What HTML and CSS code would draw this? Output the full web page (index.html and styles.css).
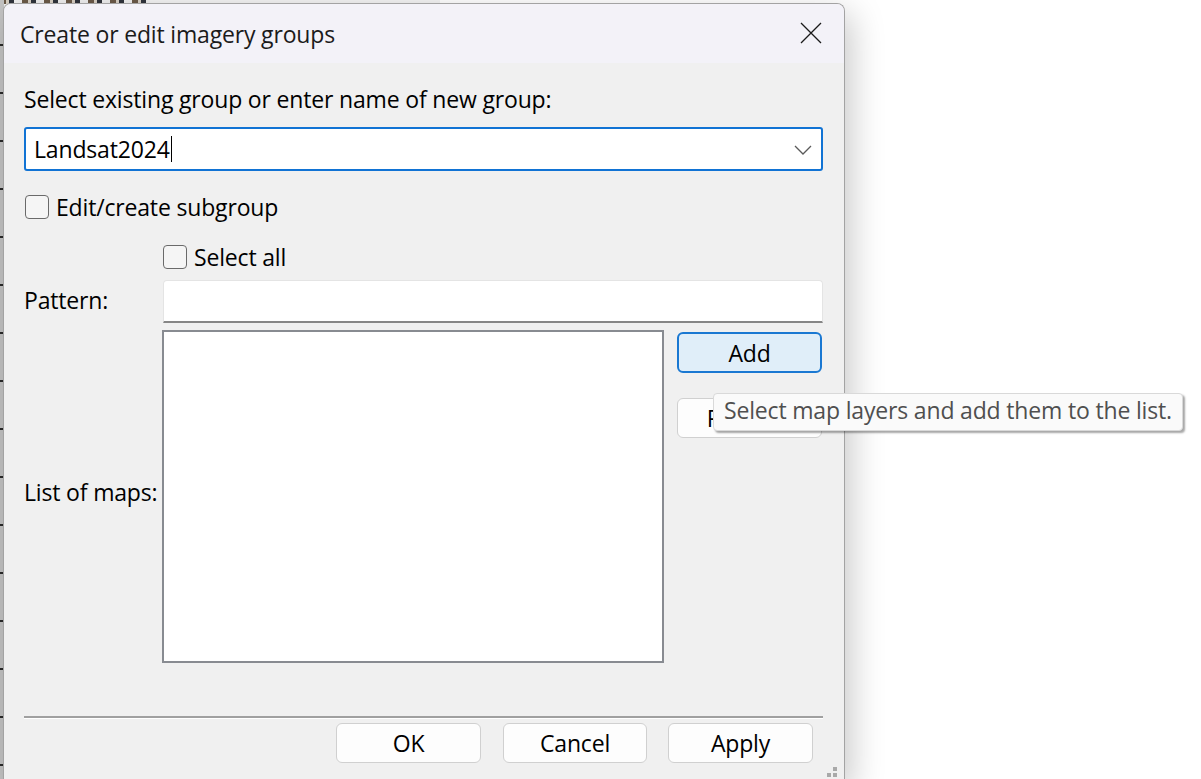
FILE: index.html
```html
<!DOCTYPE html>
<html>
<head>
<meta charset="utf-8">
<link rel="stylesheet" href="styles.css">
</head>
<body>
<div class="backdrop"><div class="backdrop-top"></div><div class="backdrop-left"></div></div>
<div class="window">
  <div class="titlebar">
    <span class="title">Create or edit imagery groups</span>
    <svg class="close" width="22" height="22" viewBox="0 0 22 22"><path d="M1 1 L21 21 M21 1 L1 21" stroke="#1a1a1a" stroke-width="1.3" fill="none"/></svg>
  </div>
  <div class="content">
    <div class="label-top">Select existing group or enter name of new group:</div>
    <div class="combo">
      <span class="combo-text">Landsat2024</span><span class="caret"></span>
      <svg class="chevron" width="18" height="10" viewBox="0 0 18 10"><path d="M1 1 L9 9 L17 1" stroke="#5a5a5a" stroke-width="1.3" fill="none"/></svg>
    </div>
    <label class="check-row sub">
      <span class="box"></span><span>Edit/create subgroup</span>
    </label>
    <div class="lower">
      <label class="check-row selall">
        <span class="box"></span><span>Select all</span>
      </label>
      <div class="lbl lbl-pattern">Pattern:</div>
      <div class="pattern"></div>
      <div class="lbl lbl-list">List of maps:</div>
      <div class="listbox"></div>
      <div class="side-buttons">
        <div class="btn btn-add">Add</div>
        <div class="btn btn-remove">Remove</div>
      </div>
    </div>
    <div class="separator"></div>
    <div class="footer">
      <div class="btn btn-foot">OK</div>
      <div class="btn btn-foot btn-cancel">Cancel</div>
      <div class="btn btn-foot">Apply</div>
    </div>
  </div>
  <svg class="grip" width="16" height="16" viewBox="0 0 16 16" fill="#a9a9a9"><rect x="12" y="0" width="4" height="4"/><rect x="6" y="6" width="4" height="4"/><rect x="12" y="6" width="4" height="4"/><rect x="0" y="12" width="4" height="4"/><rect x="6" y="12" width="4" height="4"/><rect x="12" y="12" width="4" height="4"/></svg>
</div>
<div class="tooltip">Select map layers and add them to the list.</div>
</body>
</html>
```
FILE: styles.css
```css
html, body {
  margin: 0;
  padding: 0;
}
body {
  width: 1201px;
  height: 779px;
  overflow: hidden;
  background: #ffffff;
  position: relative;
  font-family: "Open Sans", "Noto Sans", sans-serif;
  font-size: 23px;
  letter-spacing: -0.17px;
  color: #000;
}
.backdrop {
  position: absolute;
  left: 0;
  top: 0;
  width: 440px;
  height: 779px;
  background: #f4f4f4;
}
.backdrop-top {
  position: absolute;
  left: 0;
  top: 0;
  width: 150px;
  height: 4px;
  background: repeating-linear-gradient(90deg, #6b5a48 0 6px, #d8d0c4 6px 9px, #30343c 9px 14px, #f0f0f0 14px 22px);
}
.backdrop-left {
  position: absolute;
  left: 0;
  top: 0;
  width: 4px;
  height: 779px;
  background: repeating-linear-gradient(180deg, #c4c4c4 0 44px, #2a2a2a 44px 46px, #c4c4c4 46px 48px);
}
.window {
  position: relative;
  margin: 3px 0 0 3px;
  width: 840px;
  height: 779px;
  border: 1px solid #a3a3a3;
  border-bottom: none;
  border-radius: 8px 8px 0 0;
  background: #f0f0f0;
  box-shadow: 6px 10px 34px rgba(0, 0, 0, 0.22);
  overflow: hidden;
}
.titlebar {
  height: 59px;
  background: #f3f2f8;
  display: flex;
  align-items: center;
  justify-content: space-between;
  padding: 0 22px 0 16px;
}
.title {
  color: #1b1b1b;
  line-height: 32px;
  margin-top: 1px;
}
.close {
  display: block;
  margin-top: -2px;
}
.content {
  padding: 0 21px 0 20px;
}
.label-top {
  margin-top: 20px;
  line-height: 32px;
  height: 32px;
}
.combo {
  margin-top: 12px;
  height: 44px;
  box-sizing: border-box;
  border: 2px solid #1173d4;
  border-radius: 3px;
  background: #fff;
  display: flex;
  align-items: center;
  padding-left: 8px;
  padding-right: 9px;
}
.combo-text {
  line-height: 32px;
}
.caret {
  width: 1px;
  height: 26px;
  background: #000;
  margin-left: 1px;
}
.chevron {
  margin-left: auto;
  margin-top: 2px;
}
.check-row {
  display: flex;
  align-items: center;
  height: 32px;
  line-height: 32px;
}
.box {
  width: 24px;
  height: 24px;
  box-sizing: border-box;
  border: 1px solid #6a6a6a;
  border-radius: 4px;
  background: #f5f5f5;
  margin-right: 7px;
}
.check-row.sub {
  margin-top: 20px;
  margin-left: 1px;
}
.lower {
  margin-top: 18px;
  display: grid;
  grid-template-columns: 138px 502px 159px;
  grid-template-rows: 32px 43px 333px;
  row-gap: 7px;
}
.selall {
  grid-column: 2;
  grid-row: 1;
  margin-left: 1px;
}
.lbl {
  grid-column: 1;
  align-self: center;
  line-height: 32px;
}
.lbl-pattern {
  grid-row: 2;
  padding-bottom: 4px;
}
.lbl-list {
  grid-row: 3;
  padding-bottom: 10px;
}
.pattern {
  grid-column: 2 / 4;
  grid-row: 2;
  margin-left: 1px;
  background: #fff;
  border: 1px solid #e4e4e4;
  border-bottom: 2px solid #868686;
  border-radius: 4px 4px 0 0;
}
.listbox {
  grid-column: 2;
  grid-row: 3;
  background: #fff;
  border: 2px solid #888b91;
}
.side-buttons {
  grid-column: 3;
  grid-row: 3;
  padding-left: 13px;
  padding-top: 2px;
  display: flex;
  flex-direction: column;
  gap: 25px;
}
.btn {
  width: 145px;
  height: 40px;
  box-sizing: border-box;
  border: 1px solid #d0d0d0;
  border-radius: 6px;
  background: #fdfdfd;
  display: flex;
  align-items: center;
  justify-content: center;
  line-height: 32px;
}
.btn-add {
  height: 41px;
  border: 2px solid #1a78d2;
  background: #e0eef9;
}
.separator {
  margin-top: 53px;
  height: 2px;
  background: #a0a0a0;
  border-bottom: 1px solid #ffffff;
}
.footer {
  margin-top: 4px;
  display: flex;
  justify-content: flex-end;
  padding-right: 10px;
}
.btn-foot {
  width: 145px;
}
.btn-cancel {
  width: 144px;
  margin: 0 21px 0 22px;
}
.grip {
  position: absolute;
  right: 7px;
  bottom: 0;
}
.tooltip {
  position: absolute;
  left: 713px;
  top: 393px;
  width: 470px;
  height: 38px;
  box-sizing: border-box;
  background: #fafafa;
  border: 1px solid #d9d9d9;
  border-radius: 4px;
  box-shadow: 2px 2px 2px rgba(0, 0, 0, 0.35);
  padding-left: 10px;
  line-height: 32px;
  color: #4f4f4f;
}
```
